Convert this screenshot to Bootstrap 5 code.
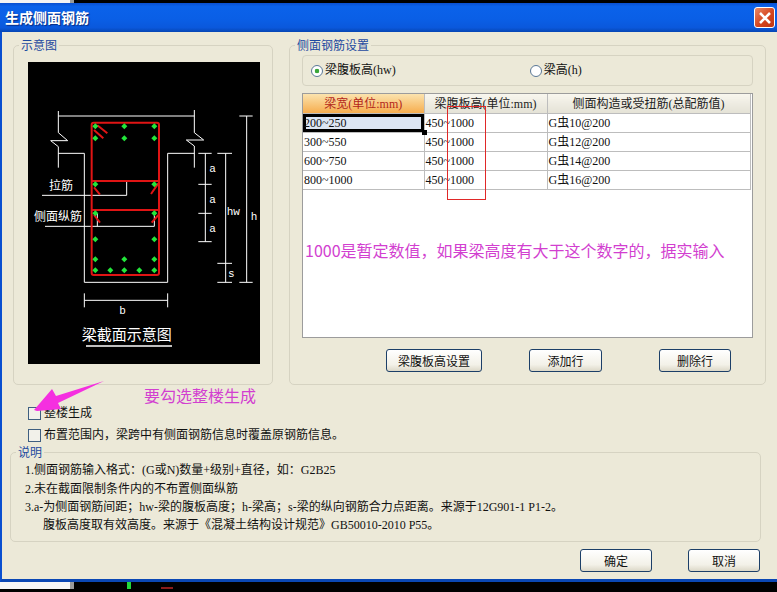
<!DOCTYPE html>
<html lang="zh">
  <head>
    <meta charset="UTF-8" />
    <title>生成侧面钢筋</title>
    <link href="https://cdn.jsdelivr.net/npm/bootstrap@5.3.0/dist/css/bootstrap.min.css" rel="stylesheet" />
    <style>
      html, body { height: 592px; overflow: hidden; }
      body {
        background: #000;
        font-family: "Liberation Serif", "Noto Sans CJK SC", serif;
        font-size: 12px;
        line-height: 1.2;
        color: #111;
      }
      .edge-strip { height: 3px; }
      .edge-white { width: 70px; background: #f4f4f4; border-right: 4px solid #9a9a9a; box-sizing: content-box; }
      .win-title {
        height: 29px;
        padding: 0 2px 0 5px;
        background: linear-gradient(#0a4fd0 0, #0b62ea 12%, #0a5fe6 55%, #0a58dc 85%, #0646b4 100%);
        color: #fff;
        font-family: "Noto Sans CJK SC", sans-serif;
        font-size: 14px;
        font-weight: 700;
        text-shadow: 1px 1px 1px #0a2c80;
      }
      .close-x {
        width: 21px;
        height: 21px;
        border: 1px solid #fff;
        border-radius: 3px;
        background: linear-gradient(135deg, #e98a66, #d6451f 55%, #c03510);
      }
      .win-main {
        height: 550px;
        background: #ece9d8;
        border-left: 2px solid #0a4fd0;
        border-bottom: 3px solid #0a47b4;
        position: relative;
      }
      .panels { padding: 6px 0 0 11px; gap: 16px; }
      fieldset.grp {
        border: 1px solid #d6d3c2;
        border-radius: 5px;
        padding: 0;
        margin: 0;
      }
      fieldset.grp > legend {
        float: none;
        width: auto;
        margin: 0 0 0 5px;
        padding: 0 2px;
        font-size: 12px;
        line-height: 14px;
        color: #1d4aa0;
        font-family: "Noto Sans CJK SC", sans-serif;
      }
      .grp-diagram { width: 260px; height: 347px; }
      .grp-diagram svg { display: block; margin: 10px 0 0 14px; }
      fieldset.grp-rebar { width: 477px; height: 347px; padding: 0 12px; }
      fieldset.grp-rebar > legend { margin-left: -7px; }
      .radio-box {
        height: 31px;
        margin-top: 3px;
        border: 1px solid #d6d3c2;
        border-radius: 4px;
        padding: 0 8px;
      }
      .radio-box .form-check-input {
        width: 12px;
        height: 12px;
        margin: 0 2px 0 0;
        background-color: #fff;
        border: 1px solid #5a7896;
        box-shadow: none;
        flex: none;
      }
      .radio-box .form-check-input:checked {
        background-color: #fff;
        border-color: #5a7896;
        background-image: radial-gradient(circle, #3aa63a 0, #3aa63a 2px, transparent 2.6px);
      }
      .radio-box .radio-second { margin-left: 134px; }
      .sheet {
        height: 245px;
        margin-top: 7px;
        background: #fff;
        border: 1px solid #9c9c9c;
        position: relative;
      }
      .sheet .table {
        width: 447px;
        margin: 0;
        table-layout: fixed;
        --bs-table-bg: transparent;
        font-size: 12px;
        color: #111;
      }
      .sheet .table th, .sheet .table td {
        height: 19px;
        padding: 0 0 0 1px;
        border: 0;
        border-right: 1px solid #bdbdbd;
        border-bottom: 1px solid #bdbdbd;
        line-height: 18px;
        white-space: nowrap;
        overflow: hidden;
      }
      .sheet .table th {
        font-weight: 400;
        text-align: center;
        padding: 0;
        background: linear-gradient(#f8f6ee, #e4e2d6);
        color: #222;
      }
      .sheet .table th.head-active { background: linear-gradient(#fbe3ae, #f6ad4e); color: #b3261a; }
      .sheet .table td.cell-active {
        background: #dde6f3;
        box-shadow: inset 0 0 0 3px #000;
        position: relative;
      }
      .cell-handle {
        position: absolute;
        width: 5px;
        height: 5px;
        background: #000;
        left: 119px;
        top: 36px;
      }
      .note-pink {
        color: #d23fd0;
        font-family: "Noto Sans CJK SC", sans-serif;
        font-size: 16px;
        line-height: 20px;
      }
      .sheet .note-pink { margin: 50px 0 0 2px; white-space: nowrap; }
      .red-frame {
        position: absolute;
        left: 144px;
        top: 12px;
        width: 39px;
        height: 94px;
        border: 1px solid #e02828;
      }
      .xp-btn {
        height: 23px;
        padding: 0;
        border: 1px solid #1c3f68;
        border-radius: 3px;
        background: linear-gradient(#fff, #f3f1e8 70%, #dcd8c8);
        color: #111;
        font-family: "Noto Sans CJK SC", sans-serif;
        font-size: 12px;
        line-height: 21px;
      }
      .rebar-btns { margin-top: 11px; }
      .w-96 { width: 96px; margin-left: 84px; }
      .w-72a { width: 73px; margin-left: 47px; }
      .w-72b { width: 72px; margin-left: 57px; }
      .hint-row { height: 20px; margin: 0 0 0 142px; }
      .chk-row { height: 13px; margin: 0 0 0 26px; gap: 3px; }
      .chk-first { margin-top: 2px; }
      .chk-second { margin-top: 9px; }
      .chk-box {
        width: 13px;
        height: 13px;
        border: 1px solid #3f5f80;
        background: #f2f1ea;
        flex: none;
      }
      .pink-arrow { position: absolute; left: 28px; top: 349px; }
      fieldset.grp-notes {
        width: 751px;
        height: 97px;
        margin: 3px 0 0 8px;
      }
      .grp-notes > legend { margin-left: 4px; }
      .note-line { height: 18px; line-height: 18px; margin-left: 14px; white-space: nowrap; }
      .note-first { margin-top: 1px; height: 20px; line-height: 20px; }
      .note-indent { margin-left: 32px; }
      .foot-btns { margin-top: 7px; }
      .foot-ok { width: 72px; margin-left: 578px; }
      .foot-cancel { width: 72px; margin-left: 36px; }
      .edge-bottom { height: 7px; }
      .edge-white-b { width: 70px; height: 7px; background: #f6f6f6; border-right: 4px solid #9a9a9a; box-sizing: content-box; }
      .edge-green { width: 4px; height: 7px; background: #22d83a; margin-left: 53px; }
      .edge-red { width: 12px; height: 2px; background: #8a1c1c; margin: 5px 0 0 30px; }
    </style>
  </head>
  <body>
    <div class="edge-strip d-flex"><div class="edge-white"></div></div>

    <div class="win-title d-flex align-items-center justify-content-between">
      <span>生成侧面钢筋</span>
      <div class="close-x d-flex align-items-center justify-content-center">
        <svg width="14" height="14" viewBox="0 0 14 14"><path d="M2 2 12 12M12 2 2 12" stroke="#fff" stroke-width="2.6" /></svg>
      </div>
    </div>

    <div class="win-main">
      <div class="panels d-flex">
        <fieldset class="grp grp-diagram">
          <legend>示意图</legend>
          <svg width="232" height="302" viewBox="24 -114 696 906">
            <rect x="24" y="-114" width="696" height="906" fill="#000" />
            <g fill="none" stroke="#fff" stroke-width="3">
              <path d="M115 33V98L143 122H92L115 140V203M115 48H523M523 30V98L551 120H499L523 138V203" />
              <path d="M115 160H193V547H443V160H523" />
              <path d="M556 160V425M535 160H575M535 253H575M535 340H575M535 425H575" />
              <path d="M617 160V547M592 160H636M592 490H636M592 547H636" />
              <path d="M680 48V547M658 48H698M658 547H698" />
              <path d="M193 601H443M193 580V622M443 580V622" />
              <path d="M66 286H320V243M75 379H403V340M232 379V340" />
            </g>
            <path d="M198 738H456" stroke="#fff" stroke-width="5" />
            <g fill="none" stroke="#e01414" stroke-width="6">
              <rect x="215" y="68" width="202" height="457" rx="6" />
              <path d="M215 243H417M215 330H417" />
              <path d="M232 76 262 100M222 90 250 115M222 262 240 284M415 250 393 282M222 345 240 368M415 345 395 368" />
            </g>
            <g fill="#22e63a">
              <path id="dot" d="M226 70 235 79 226 88 217 79Z" />
              <use href="#dot" x="87" />
              <use href="#dot" x="177" />
              <use href="#dot" y="36" />
              <use href="#dot" x="87" y="36" />
              <use href="#dot" x="177" y="36" />
              <use href="#dot" y="174" />
              <use href="#dot" x="177" y="174" />
              <use href="#dot" y="261" />
              <use href="#dot" x="177" y="261" />
              <use href="#dot" y="339" />
              <use href="#dot" x="177" y="339" />
              <use href="#dot" y="399" />
              <use href="#dot" x="87" y="399" />
              <use href="#dot" x="177" y="399" />
              <use href="#dot" y="432" />
              <use href="#dot" x="45" y="432" />
              <use href="#dot" x="87" y="432" />
              <use href="#dot" x="132" y="432" />
              <use href="#dot" x="177" y="432" />
            </g>
            <g fill="#fff" font-family="Liberation Mono, Noto Sans CJK SC, monospace" font-size="33">
              <text x="87" y="270" font-size="36">拉筋</text>
              <text x="42" y="363" font-size="36">侧面纵筋</text>
              <text x="568" y="216">a</text>
              <text x="568" y="310">a</text>
              <text x="568" y="396">a</text>
              <text x="620" y="345">hw</text>
              <text x="624" y="530">s</text>
              <text x="692" y="360">h</text>
              <text x="298" y="642">b</text>
              <text x="185" y="720" font-size="45">梁截面示意图</text>
            </g>
          </svg>
        </fieldset>

        <fieldset class="grp grp-rebar">
          <legend>侧面钢筋设置</legend>
          <div class="radio-box d-flex align-items-center">
            <input class="form-check-input mt-0" type="radio" name="hgt" checked />
            <span>梁腹板高(hw)</span>
            <input class="form-check-input mt-0 radio-second" type="radio" name="hgt" />
            <span>梁高(h)</span>
          </div>
          <div class="sheet">
            <table class="table">
              <colgroup><col style="width: 121px" /><col style="width: 123px" /><col style="width: 203px" /></colgroup>
              <thead>
                <tr><th class="head-active">梁宽(单位:mm)</th><th>梁腹板高(单位:mm)</th><th>侧面构造或受扭筋(总配筋值)</th></tr>
              </thead>
              <tbody>
                <tr><td class="cell-active">200~250</td><td>450~1000</td><td>G虫10@200</td></tr>
                <tr><td>300~550</td><td>450~1000</td><td>G虫12@200</td></tr>
                <tr><td>600~750</td><td>450~1000</td><td>G虫14@200</td></tr>
                <tr><td>800~1000</td><td>450~1000</td><td>G虫16@200</td></tr>
              </tbody>
            </table>
            <div class="cell-handle"></div>
            <div class="red-frame"></div>
            <div class="note-pink">1000是暂定数值，如果梁高度有大于这个数字的，据实输入</div>
          </div>
          <div class="rebar-btns d-flex">
            <button class="btn xp-btn w-96" type="button">梁腹板高设置</button>
            <button class="btn xp-btn w-72a" type="button">添加行</button>
            <button class="btn xp-btn w-72b" type="button">删除行</button>
          </div>
        </fieldset>
      </div>

      <div class="hint-row note-pink">要勾选整楼生成</div>
      <div class="chk-row chk-first d-flex align-items-center"><span class="chk-box"></span><span>整楼生成</span></div>
      <div class="chk-row chk-second d-flex align-items-center"><span class="chk-box"></span><span>布置范围内，梁跨中有侧面钢筋信息时覆盖原钢筋信息。</span></div>
      <svg class="pink-arrow" width="76" height="34" viewBox="0 0 76 34">
        <path d="M74 0 26 15 22 8 4 29 7 30 31 28 28 22Z" fill="#f52fe0" />
      </svg>

      <fieldset class="grp grp-notes">
        <legend>说明</legend>
        <div class="note-line note-first">1.侧面钢筋输入格式：(G或N)数量+级别+直径，如：G2B25</div>
        <div class="note-line">2.未在截面限制条件内的不布置侧面纵筋</div>
        <div class="note-line">3.a-为侧面钢筋间距；hw-梁的腹板高度；h-梁高；s-梁的纵向钢筋合力点距离。来源于12G901-1 P1-2。</div>
        <div class="note-line note-indent">腹板高度取有效高度。来源于《混凝土结构设计规范》GB50010-2010 P55。</div>
      </fieldset>

      <div class="foot-btns d-flex">
        <button class="btn xp-btn foot-ok" type="button">确定</button>
        <button class="btn xp-btn foot-cancel" type="button">取消</button>
      </div>
    </div>

    <div class="edge-bottom d-flex"><div class="edge-white-b"></div><div class="edge-green"></div><div class="edge-red"></div></div>
  </body>
</html>
